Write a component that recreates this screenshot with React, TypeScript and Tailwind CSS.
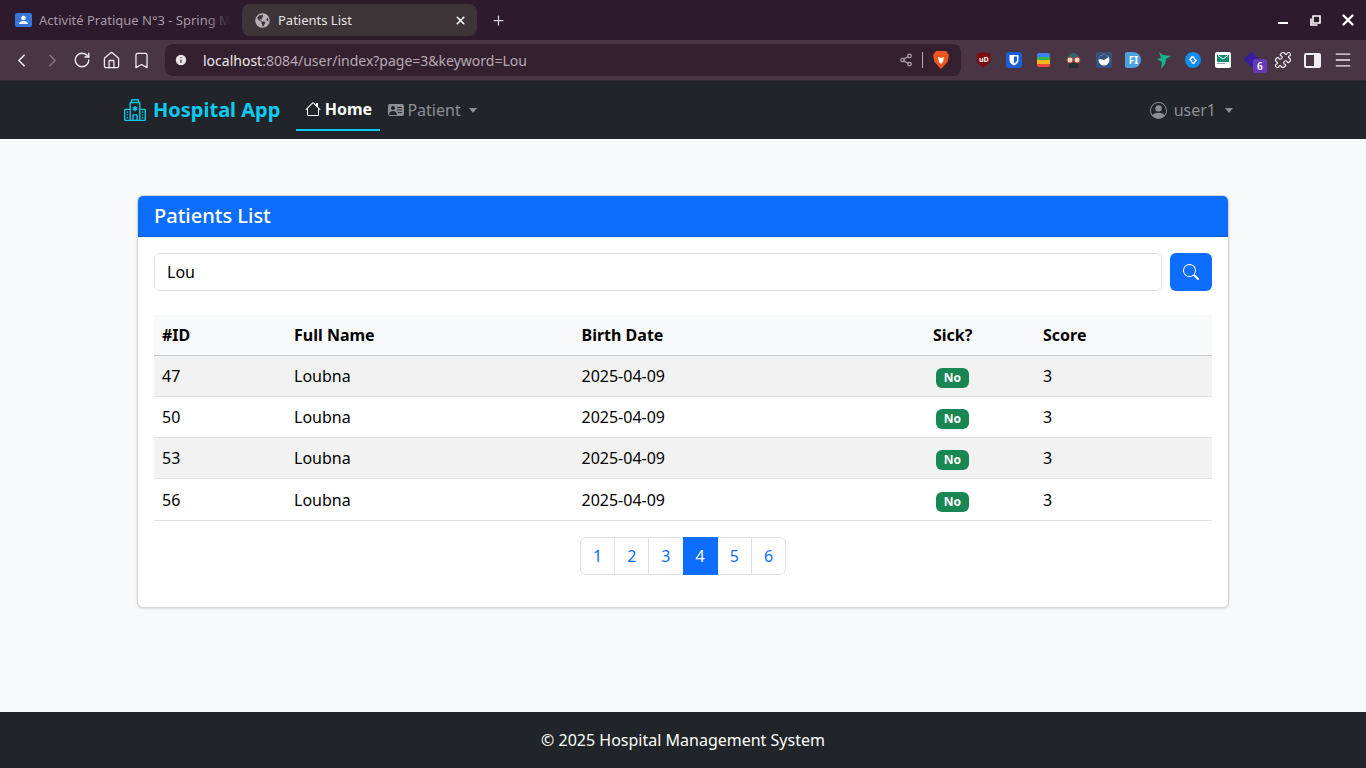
import { useState } from "react";
import { ChevronLeft, ChevronRight, RotateCw, Plus, X, Bookmark, Share2, Puzzle, Menu, Info, Home } from "lucide-react";
import { BsHospital, BsHouse, BsPersonVcardFill, BsPersonCircle, BsSearch } from "react-icons/bs";
import { FaGlobeAmericas } from "react-icons/fa";

const patients = [
  { id: 47, name: "Loubna", birth: "2025-04-09", score: 3 },
  { id: 50, name: "Loubna", birth: "2025-04-09", score: 3 },
  { id: 53, name: "Loubna", birth: "2025-04-09", score: 3 },
  { id: 56, name: "Loubna", birth: "2025-04-09", score: 3 },
];

const Caret = () => (
  <span className="ml-[8px] inline-block border-x-[4.5px] border-t-[5px] border-x-transparent border-t-current" />
);

const Slot = ({ children }: { children: React.ReactNode }) => (
  <div className="w-[29.900px] flex items-center justify-center">{children}</div>
);

const BrowserChrome = () => (
  <div className="font-['Noto_Sans',sans-serif]">
    <div className="h-10 bg-[#2d1b2d] flex items-center pl-[15px] pr-[9px] text-[13px]">
      <svg width="17" height="14" viewBox="0 0 17 14">
        <rect width="17" height="14" rx="2" fill="#3a76d8" />
        <circle cx="8.500" cy="5" r="2.300" fill="#fff" />
        <path d="M4 11c0-2 2-3 4.500-3s4.500 1 4.500 3z" fill="#fff" />
      </svg>
      <div className="relative ml-[7px] w-[191px] overflow-hidden whitespace-nowrap text-[#a49aa3] pt-[1px]">
        Activité Pratique N°3 - Spring M
        <div className="absolute right-0 top-0 bottom-0 w-[24px] bg-gradient-to-r from-transparent to-[#2d1b2d]" />
      </div>
      <div className="ml-[12px] w-[235px] h-[32px] rounded-[8px] bg-[#3d3438] flex items-center pl-[13px] pr-[10px] text-[#e6e1e4]">
        <FaGlobeAmericas size={15} className="text-[#b5b0b3]" />
        <span className="ml-[8px] flex-1 pt-[1px]">Patients List</span>
        <X size={13} strokeWidth={3} className="text-white" />
      </div>
      <Plus size={15} strokeWidth={2} className="ml-[14px] text-[#d8d2d6]" />
      <div className="ml-auto flex items-center gap-[18px] text-white">
        <div className="w-[10px] h-[2px] mt-[6px] mr-[4px] bg-white" />
        <svg width="11" height="11" viewBox="0 0 11 11" fill="none" stroke="#fff" strokeWidth="1.600">
          <path d="M3 1h7v7H3z" />
          <path d="M1 3.500V10h6.500" />
        </svg>
        <X size={18} strokeWidth={3} />
      </div>
    </div>
    <div className="h-[41px] bg-[#4a3545] border-b border-[#2d2a2e] flex items-center pl-[11px] text-[#f1edf0]">
      <ChevronLeft size={21} strokeWidth={1.8} />
      <ChevronRight size={21} strokeWidth={1.8} className="ml-[10px] text-[#85747f]" />
      <RotateCw size={18} strokeWidth={1.8} className="ml-[10px]" />
      <Home size={19} strokeWidth={1.6} className="ml-[11px]" />
      <Bookmark size={19} strokeWidth={1.6} className="ml-[11px]" />
      <div className="ml-[14px] w-[796px] h-[32px] rounded-[8px] bg-[#35202f] flex items-center pl-[9px] pr-[12px]">
        <Info size={14} fill="#e7e2e6" className="text-[#35202f]" />
        <span className="ml-[15px] text-[14px] flex-1 text-[#b6aab3]">
          <span className="text-[#ece7ea]">localhost</span>:8084/user/index?page=3&amp;keyword=Lou
        </span>
        <Share2 size={14} className="text-[#b6aab3]" />
        <div className="ml-[9px] w-px h-4 bg-[#b6aab3]" />
        <svg width="16" height="18" viewBox="0 0 16 18" className="ml-[10px]">
          <path d="M3 0h10l3 4-1.500 7-6.500 7-6.500-7L0 4z" fill="#f1561f" />
          <path d="M5 6l3 1 3-1-1 5-2 2-2-2z" fill="#fff" />
        </svg>
      </div>
      <div className="ml-[8px] flex items-center">
        <Slot>
          <svg width="15" height="16" viewBox="0 0 15 16"><path d="M7.500 0l7 2v8l-7 6-7-6V2z" fill="#7a0c12" /><text x="3" y="10" fontSize="7" fontWeight="700" fill="#fff">uD</text></svg>
        </Slot>
        <Slot>
          <svg width="16" height="16" viewBox="0 0 16 16"><rect width="16" height="16" rx="3" fill="#175ddc" /><path d="M3.500 3h9v5c0 3-2.500 4.500-4.500 5.500C6 12.500 3.500 11 3.500 8z" fill="#fff" /><path d="M8 4.500h3v3.500c0 1.500-1.500 2.500-3 3.500z" fill="#175ddc" /></svg>
        </Slot>
        <Slot>
          <div className="w-[13px] h-[14px] rounded-[2px] overflow-hidden flex flex-col">
            <div className="flex-1 bg-[#3b82f6]" /><div className="flex-1 bg-[#36b24a]" /><div className="flex-1 bg-[#f5b71f]" /><div className="flex-1 bg-[#ef4a3c]" />
          </div>
        </Slot>
        <Slot>
          <svg width="17" height="16" viewBox="0 0 17 16"><path d="M2 9a6.500 8 0 0113 0z" fill="#2f6672" /><rect x="4" y="11" width="9" height="5" fill="#22303a" /><circle cx="5" cy="8" r="3" fill="#ecd5c8" stroke="#b5482f" /><circle cx="12" cy="8" r="3" fill="#ecd5c8" stroke="#b5482f" /></svg>
        </Slot>
        <Slot>
          <svg width="16" height="16" viewBox="0 0 16 16"><rect width="16" height="16" rx="2" fill="#35517f" /><circle cx="8" cy="8" r="5.500" fill="#fff" /><path d="M2.500 8c2-2 3.500 0 5 0s3-1.500 5-3a5.500 5.500 0 00-10 3z" fill="#35517f" /></svg>
        </Slot>
        <Slot>
          <div className="w-[16px] h-[16px] rounded-l-[2px] rounded-r-[8px] bg-[#4aa3df] text-white text-[10px] font-bold flex items-center justify-center">FI</div>
        </Slot>
        <Slot>
          <svg width="15" height="17" viewBox="0 0 15 17"><path d="M3 0l4 3 8 1-5 3-1 5-4 5 1-7-5-3 4-1z" fill="#14b48c" /></svg>
        </Slot>
        <Slot>
          <svg width="16" height="16" viewBox="0 0 16 16"><circle cx="8" cy="8" r="8" fill="#0f8cf0" /><path d="M9.500 5.500L7 5 5 7.500l2 2M6.500 10.500L9 11l2-2.500-2-2" fill="none" stroke="#fff" strokeWidth="1.600" /></svg>
        </Slot>
        <Slot>
          <svg width="16" height="16" viewBox="0 0 16 16"><rect width="16" height="16" rx="2" fill="#fff" /><rect x="2" y="3" width="12" height="7" fill="#138a72" /><path d="M3 3.500l5 3.500 5-3.500" fill="none" stroke="#fff" /><rect x="2" y="11" width="8" height="1" fill="#8ab" /></svg>
        </Slot>
        <Slot>
          <div className="relative w-[16px] h-[16px]">
            <div className="absolute left-[1px] top-[2px] w-[11px] h-[11px] rotate-45 bg-[#3a1d9e]" />
            <div className="absolute left-[8px] top-[7px] w-[14px] h-[14px] rounded-[3px] bg-[#6639ba] text-white text-[10px] font-semibold flex items-center justify-center">6</div>
          </div>
        </Slot>
        <Slot>
          <Puzzle size={18} strokeWidth={1.6} />
        </Slot>
        <Slot>
          <div className="w-[17px] h-[15px] rounded-[2px] border-2 border-[#f1edf0] flex justify-end">
            <div className="w-[5px] bg-[#f1edf0]" />
          </div>
        </Slot>
        <Slot>
          <Menu size={20} strokeWidth={1.6} />
        </Slot>
      </div>
    </div>
  </div>
);

const Navbar = () => (
  <nav className="h-[58px] bg-[#212529] pl-[124px] pr-[133px] flex items-center">
    <BsHospital size={22} className="text-[#0dcaf0]" />
    <span className="ml-[7px] text-[20px] font-bold text-[#0dcaf0]">Hospital App</span>
    <div className="ml-[16px] h-[42px] w-[84px] border-b-2 border-[#0dcaf0] flex items-center justify-center font-bold text-white">
      <BsHouse size={16} />
      <span className="ml-[4px]">Home</span>
    </div>
    <div className="ml-[8px] flex items-center text-[#8c8f92]">
      <BsPersonVcardFill size={16} />
      <span className="ml-[3px]">Patient</span>
      <Caret />
    </div>
    <div className="ml-auto flex items-center text-[#8c8f92]">
      <BsPersonCircle size={17} />
      <span className="ml-[7px] mr-[1px]">user1</span>
      <Caret />
    </div>
  </nav>
);

export default function App() {
  const [keyword, setKeyword] = useState("Lou");

  return (
    <div className="h-[768px] overflow-hidden flex flex-col bg-[#f8f9fa] text-black font-['Noto_Sans',sans-serif] text-[16px]">
      <BrowserChrome />
      <Navbar />

      <main className="flex-1 px-[137px] pt-[56px]">
        <div className="h-[413px] bg-white border border-[#d4d5d6] rounded-[6px] shadow-sm overflow-hidden">
          <div className="h-[41px] bg-[#0d6efd] border-b border-[#0b5ed7] pl-[16px] flex items-center text-white text-[20px] font-medium">
            Patients List
          </div>
          <div className="px-[16px] pt-[16px]">
            <div className="flex gap-[8px]">
              <input
                value={keyword}
                onChange={(e) => setKeyword(e.target.value)}
                className="flex-1 h-[38px] px-[12px] border border-[#dee2e6] rounded-[6px] outline-none"
              />
              <button className="w-[42px] h-[38px] rounded-[6px] bg-[#0d6efd] text-white flex items-center justify-center">
                <BsSearch size={16} />
              </button>
            </div>

            <table className="mt-[24px] w-full border-collapse table-fixed">
              <thead>
                <tr className="h-[40px] bg-[#f8f9fa] border-b border-[#c4c6c8] font-bold text-left">
                  <th className="w-[132px] pl-[8px]">#ID</th>
                  <th className="w-[287.500px] pl-[8px]">Full Name</th>
                  <th className="w-[351.500px] pl-[8px]">Birth Date</th>
                  <th className="w-[110px] pl-[8px]">Sick?</th>
                  <th className="pl-[8px]">Score</th>
                </tr>
              </thead>
              <tbody>
                {patients.map((p, i) => (
                  <tr key={p.id} className={`h-[41.300px] border-b border-[#dee2e6] ${i % 2 === 0 ? "bg-[#f2f2f2]" : "bg-white"}`}>
                    <td className="pl-[8px]">{p.id}</td>
                    <td className="pl-[8px]">{p.name}</td>
                    <td className="pl-[8px]">{p.birth}</td>
                    <td className="pl-[11px]">
                      <span className="inline-flex items-center justify-center w-[33px] h-[20px] mt-[3px] rounded-[6px] bg-[#198754] text-white text-[12px] font-bold">No</span>
                    </td>
                    <td className="pl-[8px]">{p.score}</td>
                  </tr>
                ))}
              </tbody>
            </table>

            <ul className="mt-[16px] flex justify-center">
              {[1, 2, 3, 4, 5, 6].map((n) => (
                <li
                  key={n}
                  className={`h-[38px] w-[35.200px] flex items-center justify-center border -ml-px first:ml-0 first:rounded-l-[6px] last:rounded-r-[6px] ${
                    n === 4 ? "bg-[#0d6efd] border-[#0d6efd] text-white relative" : "bg-white border-[#dee2e6] text-[#0d6efd]"
                  }`}
                >
                  {n}
                </li>
              ))}
            </ul>
          </div>
        </div>
      </main>

      <footer className="h-[56px] bg-[#212529] text-white flex items-center justify-center">
        © 2025 Hospital Management System
      </footer>
    </div>
  );
}
